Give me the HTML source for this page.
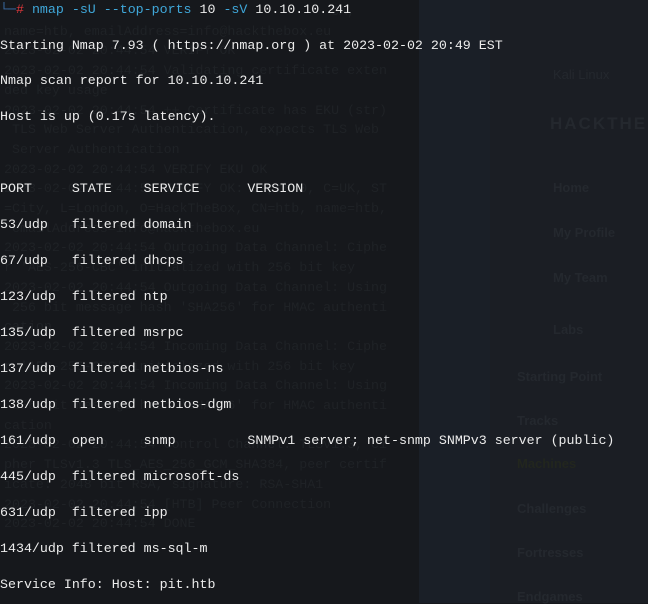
<!DOCTYPE html>
<html><head><meta charset="utf-8"><style>
html,body{margin:0;padding:0;width:648px;height:603px;overflow:hidden;background:#16181c;}
.p1{position:absolute;left:419px;top:0;width:71px;height:603px;background:#1a1f27;}
.p2{position:absolute;left:490px;top:0;width:158px;height:603px;background:#1b1e24;}
.ghost{position:absolute;left:4px;top:2px;font:13.3px/19.7px "Liberation Mono",monospace;color:#1f2226;white-space:pre;}
.side{position:absolute;font:bold 13px "Liberation Sans",sans-serif;color:#24282e;}
.t{position:absolute;left:0;top:0;font:13.3px/18px "Liberation Mono",monospace;color:#ececec;white-space:pre;}
.l{position:absolute;left:0;}
</style></head><body>
<div class="p1"></div><div class="p2"></div>
<div class="ghost">                                         CA,
name=htb, emailAddress=info@hackthebox.eu
2023-02-02 20:44:54 VERIFY OK
2023-02-02 20:44:54 Validating certificate exten
ded key usage
2023-02-02 20:44:54 ++ Certificate has EKU (str)
 TLS Web Server Authentication, expects TLS Web
 Server Authentication
2023-02-02 20:44:54 VERIFY EKU OK
2023-02-02 20:44:54 VERIFY OK: depth=0, C=UK, ST
=City, L=London, O=HackTheBox, CN=htb, name=htb,
 emailAddress=info@hackthebox.eu
2023-02-02 20:44:54 Outgoing Data Channel: Ciphe
r 'AES-256-CBC' initialized with 256 bit key
2023-02-02 20:44:54 Outgoing Data Channel: Using
 256 bit message hash 'SHA256' for HMAC authenti
cation
2023-02-02 20:44:54 Incoming Data Channel: Ciphe
r 'AES-256-CBC' initialized with 256 bit key
2023-02-02 20:44:54 Incoming Data Channel: Using
 256 bit message hash 'SHA256' for HMAC authenti
cation
2023-02-02 20:44:54 Control Channel: TLSv1.3, ci
pher TLSv1.3 TLS_AES_256_GCM_SHA384, peer certif
icate: 2048 bit RSA, signature: RSA-SHA1
2023-02-02 20:44:54 [HTB] Peer Connection
2023-02-02 20:44:54 DONE</div>
<div class="side" style="left:553px;top:67px;font-weight:normal">Kali Linux</div>
<div class="side" style="left:550px;top:114px;font-size:17px;letter-spacing:2px">HACKTHEB</div>
<div class="side" style="left:553px;top:180px">Home</div>
<div class="side" style="left:553px;top:225px">My Profile</div>
<div class="side" style="left:553px;top:270px">My Team</div>
<div class="side" style="left:553px;top:322px">Labs</div>
<div class="side" style="left:517px;top:369px">Starting Point</div>
<div class="side" style="left:517px;top:413px">Tracks</div>
<div class="side" style="left:517px;top:456px;color:#22261e">Machines</div>
<div class="side" style="left:517px;top:501px">Challenges</div>
<div class="side" style="left:517px;top:545px">Fortresses</div>
<div class="side" style="left:517px;top:589px">Endgames</div>
<div class="t">
<div class="l" style="top:1px"><span style="color:#3b6ea8">└─</span><span style="color:#e0383b">#</span> <span style="color:#3fa7d9">nmap -sU --top-ports</span> 10 <span style="color:#3fa7d9">-sV</span> 10.10.10.241</div>
<div class="l" style="top:37px">Starting Nmap 7.93 ( https://nmap.org ) at 2023-02-02 20:49 EST</div>
<div class="l" style="top:72px">Nmap scan report for 10.10.10.241</div>
<div class="l" style="top:108px">Host is up (0.17s latency).</div>
<div class="l" style="top:180px">PORT     STATE    SERVICE      VERSION</div>
<div class="l" style="top:216px">53/udp   filtered domain</div>
<div class="l" style="top:252px">67/udp   filtered dhcps</div>
<div class="l" style="top:288px">123/udp  filtered ntp</div>
<div class="l" style="top:324px">135/udp  filtered msrpc</div>
<div class="l" style="top:360px">137/udp  filtered netbios-ns</div>
<div class="l" style="top:396px">138/udp  filtered netbios-dgm</div>
<div class="l" style="top:432px">161/udp  open     snmp         SNMPv1 server; net-snmp SNMPv3 server (public)</div>
<div class="l" style="top:468px">445/udp  filtered microsoft-ds</div>
<div class="l" style="top:504px">631/udp  filtered ipp</div>
<div class="l" style="top:540px">1434/udp filtered ms-sql-m</div>
<div class="l" style="top:576px">Service Info: Host: pit.htb</div>
</div>
</body></html>
